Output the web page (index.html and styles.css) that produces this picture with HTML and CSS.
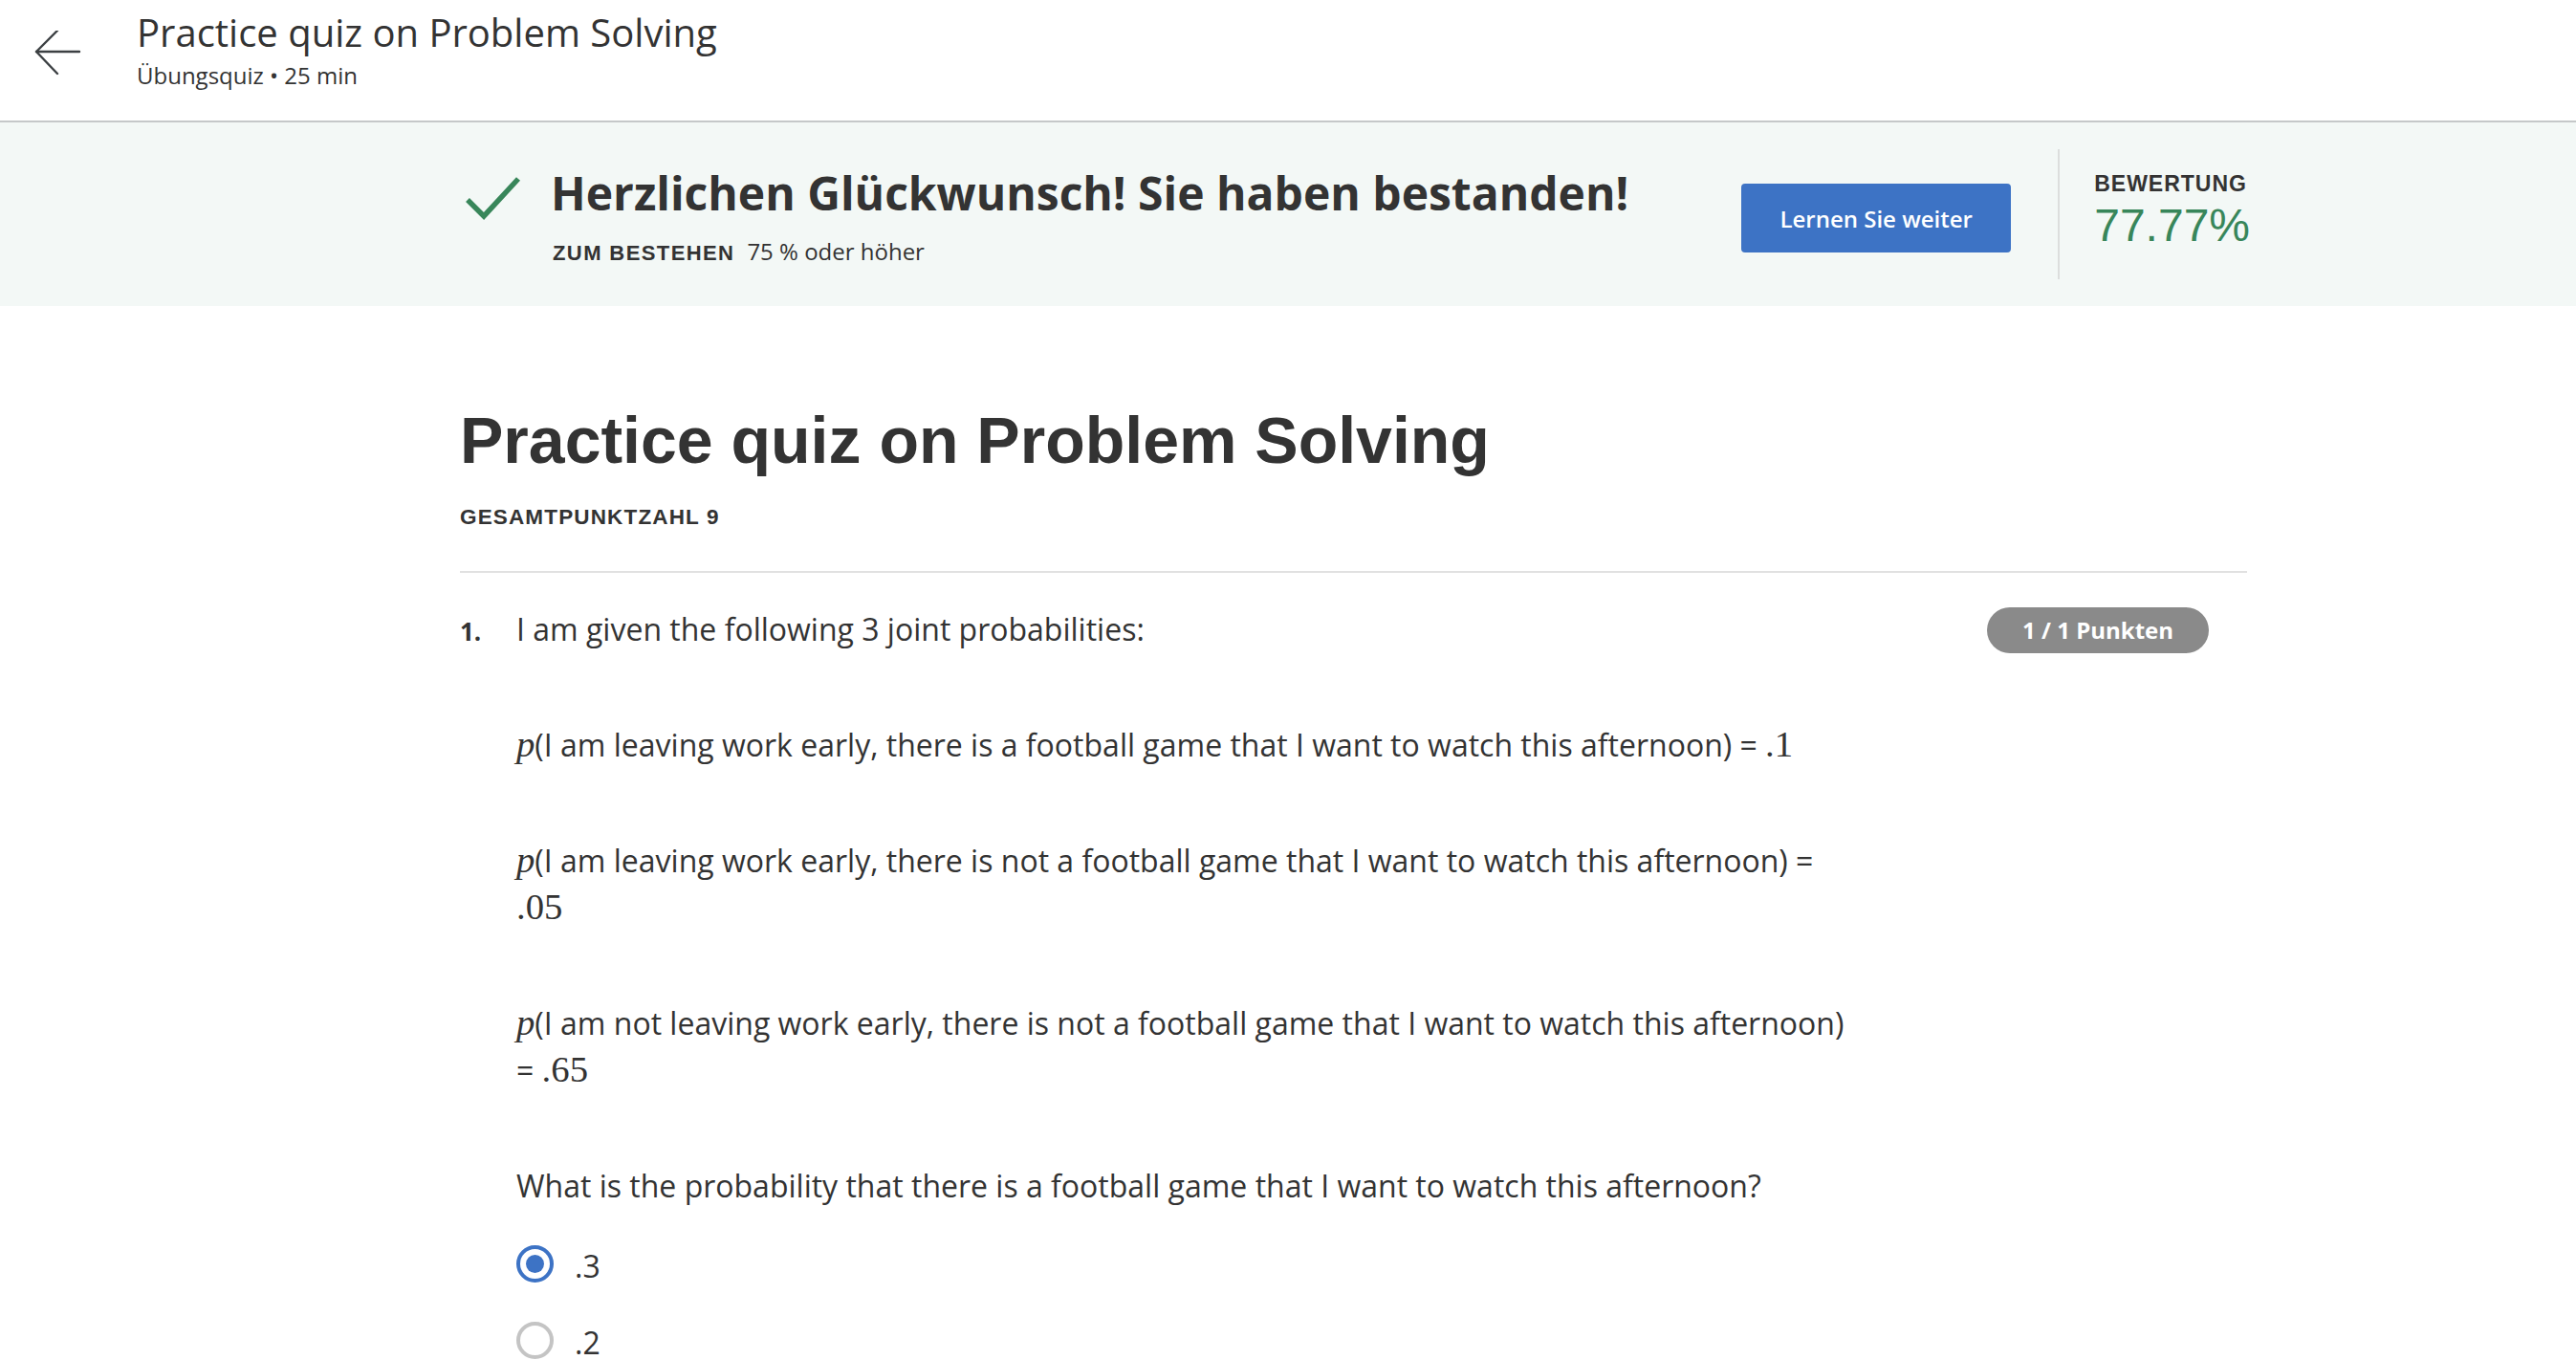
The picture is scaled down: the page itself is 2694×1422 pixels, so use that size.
FILE: index.html
```html
<!DOCTYPE html>
<html lang="de">
<head>
<meta charset="utf-8">
<title>Practice quiz on Problem Solving</title>
<link rel="stylesheet" href="styles.css">
</head>
<body>
<header class="topbar">
  <a class="back" href="#" aria-label="Zurück">
    <svg width="52" height="52" viewBox="0 0 52 52" fill="none" stroke="#3c4043" stroke-width="2.4" stroke-linecap="round" stroke-linejoin="round">
      <path d="M2 22 H47"/>
      <path d="M24 0 L2 22 L24 45"/>
    </svg>
  </a>
  <div class="topbar-text">
    <div class="topbar-title">Practice quiz on Problem Solving</div>
    <div class="topbar-sub">Übungsquiz • 25 min</div>
  </div>
</header>

<section class="banner">
  <div class="wrap banner-inner">
    <div class="pass">
      <svg class="check" width="60" height="48" viewBox="0 0 60 48" fill="none" stroke="#38865a" stroke-width="5.5">
        <polyline points="4,25 21,42 57,3"/>
      </svg>
      <div class="pass-text">
        <h2 class="pass-title">Herzlichen Glückwunsch! Sie haben bestanden!</h2>
        <div class="pass-req"><span class="label req-label">ZUM BESTEHEN</span><span class="req-val">75 % oder höher</span></div>
      </div>
    </div>
    <button class="btn-primary">Lernen Sie weiter</button>
    <div class="divider"></div>
    <div class="score">
      <div class="label score-label">BEWERTUNG</div>
      <div class="score-val">77.77%</div>
    </div>
  </div>
</section>

<main class="wrap content">
  <h1 class="quiz-title">Practice quiz on Problem Solving</h1>
  <div class="label total">GESAMTPUNKTZAHL 9</div>
  <hr class="rule">

  <div class="question">
    <div class="qnum">1.</div>
    <div class="qbody">
      <p class="qp">I am given the following 3 joint probabilities:</p>
      <p class="qp"><span class="m mi">p</span>(I am leaving work early, there is a football game that I want to watch this afternoon) = <span class="m">.1</span></p>
      <p class="qp"><span class="m mi">p</span>(I am leaving work early, there is not a football game that I want to watch this afternoon) = <span class="m">.05</span></p>
      <p class="qp"><span class="m mi">p</span>(I am not leaving work early, there is not a football game that I want to watch this afternoon) = <span class="m">.65</span></p>
      <p class="qp">What is the probability that there is a football game that I want to watch this afternoon?</p>
      <div class="options">
        <div class="option"><span class="radio checked"></span><span class="opt-text">.3</span></div>
        <div class="option"><span class="radio"></span><span class="opt-text">.2</span></div>
      </div>
    </div>
    <div class="badge">1 / 1 Punkten</div>
  </div>
</main>
</body>
</html>
```

FILE: styles.css
```css
* { box-sizing: border-box; }

html, body {
  margin: 0;
  padding: 0;
  background: #ffffff;
  color: #333333;
  font-family: "Open Sans", "Liberation Sans", sans-serif;
}

.wrap {
  margin-left: 481px;
  width: 1869px;
}

/* Top bar */
.topbar {
  height: 128px;
  border-bottom: 2px solid #c5c8c9;
  display: flex;
  align-items: flex-start;
}

.back {
  display: block;
  margin-left: 36px;
  margin-top: 32px;
  width: 52px;
  height: 52px;
}

.topbar-text {
  margin-left: 55px;
  padding-top: 10px;
}

.topbar-title {
  font-size: 40px;
  line-height: 48px;
  color: #333333;
}

.topbar-sub {
  margin-top: 5px;
  font-size: 24px;
  line-height: 32px;
  color: #333333;
}

/* Banner */
.banner {
  background: #f3f8f6;
  height: 192px;
}

.banner-inner {
  height: 100%;
  display: flex;
  align-items: center;
}

.pass {
  display: flex;
  align-items: flex-start;
  margin-top: 4px;
}

.check {
  display: block;
  margin-left: 4px;
  margin-top: 12px;
  flex: none;
}

.pass-text {
  margin-left: 31px;
}

.pass-title {
  margin: 0;
  font-size: 48px;
  line-height: 60px;
  font-weight: 700;
  color: #333333;
}

.label {
  font-family: "Liberation Sans", Arial, sans-serif;
  font-weight: 700;
  color: #333333;
}

.pass-req {
  margin-top: 16px;
  line-height: 30px;
  display: flex;
  align-items: baseline;
  padding-left: 2px;
}

.req-label {
  font-size: 22px;
  letter-spacing: 1.4px;
}

.req-val {
  margin-left: 13px;
  font-size: 24px;
  color: #333333;
}

.btn-primary {
  margin-left: auto;
  margin-top: 8px;
  width: 282px;
  height: 72px;
  border: none;
  border-radius: 4px;
  background: #3d73c5;
  color: #ffffff;
  font-family: "Open Sans", "Liberation Sans", sans-serif;
  font-size: 24px;
  font-weight: 600;
}

.divider {
  margin-left: 49px;
  width: 2px;
  height: 136px;
  background: #dcdedd;
}

.score {
  margin-left: 36px;
  margin-right: -3px;
  margin-bottom: 7px;
}

.score-label {
  font-size: 23px;
  line-height: 28px;
  letter-spacing: 1px;
}

.score-val {
  margin-top: 2px;
  font-family: "Liberation Sans", Arial, sans-serif;
  font-size: 48px;
  line-height: 56px;
  color: #38865a;
}

/* Main content */
.content {
  padding-top: 100px;
}

.quiz-title {
  margin: 0;
  font-family: "Liberation Sans", Arial, sans-serif;
  font-weight: 700;
  font-size: 68px;
  line-height: 80px;
  color: #333333;
}

.total {
  margin-top: 27px;
  font-size: 22.5px;
  line-height: 28px;
  letter-spacing: 1.15px;
}

.rule {
  margin: 42px 0 0 0;
  border: none;
  height: 2px;
  background: #e1e1e1;
}

.question {
  margin-top: 34px;
  display: flex;
  align-items: flex-start;
}

.qnum {
  width: 59px;
  flex: none;
  padding-top: 3px;
  font-size: 26px;
  font-weight: 700;
  line-height: 49px;
}

.qbody {
  width: 1402px;
  flex: none;
}

.qp {
  margin: 0 0 72px 0;
  font-size: 32px;
  line-height: 49px;
  color: #333333;
}

.qp:last-of-type {
  margin-bottom: 0;
}

.m {
  font-family: "Liberation Serif", "DejaVu Serif", serif;
  font-size: 1.21em;
  line-height: normal;
}

.mi {
  font-style: italic;
}

.options {
  margin-top: 3px;
}

.option {
  display: flex;
  align-items: center;
  height: 47px;
  margin-top: 36px;
}

.option + .option {
  margin-top: 33px;
}

.radio {
  width: 39px;
  height: 39px;
  border-radius: 50%;
  border: 4px solid #c4c4c4;
  display: flex;
  align-items: center;
  justify-content: center;
  flex: none;
  margin-top: -5px;
}

.radio.checked {
  border-color: #3d73c5;
}

.radio.checked::after {
  content: "";
  width: 19px;
  height: 19px;
  border-radius: 50%;
  background: #3d73c5;
}

.opt-text {
  margin-left: 22px;
  font-size: 32px;
  line-height: 47px;
}

.badge {
  margin-left: auto;
  margin-right: 40px;
  margin-top: 2px;
  height: 48px;
  padding: 0 37px;
  border-radius: 24px;
  background: #8a8a8a;
  color: #ffffff;
  font-size: 24px;
  font-weight: 700;
  line-height: 48px;
  white-space: nowrap;
}
```
